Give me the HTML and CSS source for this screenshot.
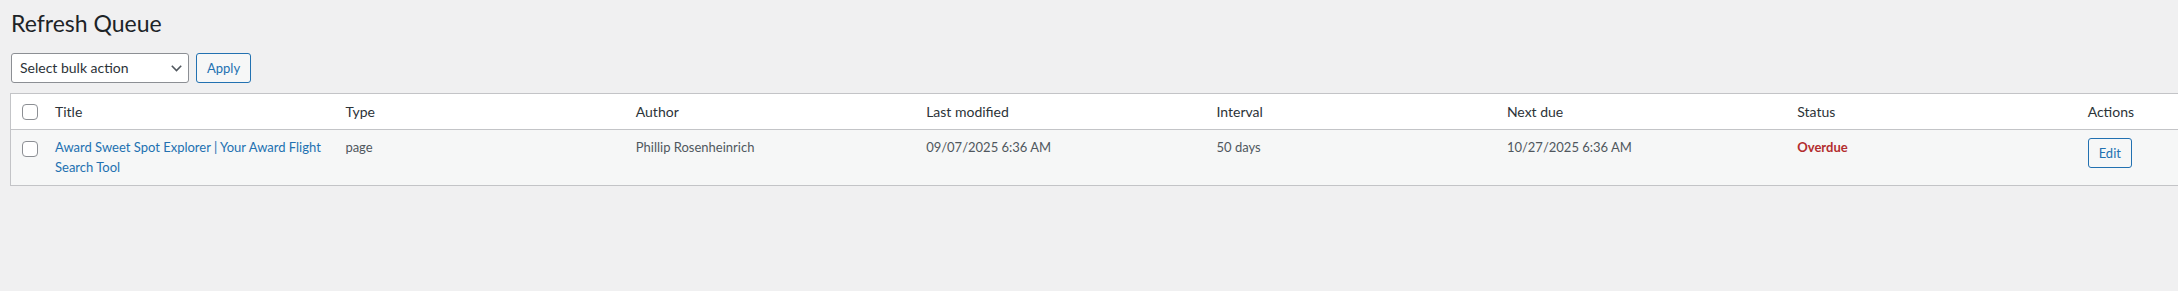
FILE: index.html
```html
<!DOCTYPE html>
<html lang="en">
<head>
    <meta charset="UTF-8">
    <meta name="viewport" content="width=device-width, initial-scale=1.0">
    <title>Refresh Queue</title>
    <link rel="stylesheet" href="styles.css">
</head>
<body>

<div class="wrap">

    <!-- Page Heading -->
    <h1>Refresh Queue</h1>

    <form id="queueForm">
        <!-- Bulk Actions -->
        <div class="tablenav">
            <div class="select-wrap">
                <select name="bulk_action" id="bulkAction">
                    <option value="-1">Select bulk action</option>
                    <option value="refresh">Mark as refreshed</option>
                    <option value="remove">Remove from queue</option>
                </select>
                <svg class="select-arrow" width="11" height="7" viewBox="0 0 11 7"><polyline points="0.8,0.8 5.5,5.5 10.2,0.8" /></svg>
            </div>
            <button type="submit" class="button">Apply</button>
        </div>

        <!-- Queue Table -->
        <div class="table-wrap">
            <table class="queue-table">
                <thead>
                    <tr>
                        <td class="check-column"><input type="checkbox" id="selectAll"></td>
                        <th>Title</th>
                        <th>Type</th>
                        <th>Author</th>
                        <th>Last modified</th>
                        <th>Interval</th>
                        <th>Next due</th>
                        <th>Status</th>
                        <th>Actions</th>
                    </tr>
                </thead>
                <tbody>
                    <tr>
                        <th class="check-column"><input type="checkbox" name="post[]" value="1"></th>
                        <td><a href="#">Award Sweet Spot Explorer | Your Award Flight Search Tool</a></td>
                        <td>page</td>
                        <td>Phillip Rosenheinrich</td>
                        <td>09/07/2025 6:36 AM</td>
                        <td>50 days</td>
                        <td>10/27/2025 6:36 AM</td>
                        <td><span class="status-overdue">Overdue</span></td>
                        <td><a href="#" class="button">Edit</a></td>
                    </tr>
                </tbody>
            </table>
        </div>
    </form>

</div>

<script>
    // Select all rows from the header checkbox
    document.getElementById('selectAll').addEventListener('change', function() {
        document.querySelectorAll('input[name="post[]"]').forEach(box => box.checked = this.checked);
    });

    document.getElementById('queueForm').addEventListener('submit', function(event) {
        event.preventDefault();
    });
</script>

</body>
</html>
```

FILE: styles.css
```css
body {
    margin: 0;
    font-family: "Segoe UI", Lato, "Liberation Sans", sans-serif;
    font-size: 13px;
    color: #3c434a;
    background-color: #f0f0f1; /* Admin grey */
}
.wrap {
    padding-left: 10px;
}
h1 {
    margin: 0;
    padding: 9px 0 4px 1px;
    font-size: 23px;
    font-weight: 400;
    line-height: 1.3;
    color: #1d2327;
}
.tablenav {
    display: flex;
    gap: 7px;
    margin: 10px 0;
    padding-left: 1px;
    height: 30px;
}
.select-wrap {
    position: relative;
}
select {
    appearance: none;
    -webkit-appearance: none;
    width: 178px;
    height: 30px;
    padding: 0 24px 0 8px;
    font-family: inherit;
    font-size: 14px;
    color: #2c3338;
    background-color: #fff;
    border: 1px solid #8c8f94;
    border-radius: 3px;
}
.select-arrow {
    position: absolute;
    top: 12px;
    right: 7px;
    pointer-events: none;
}
.select-arrow polyline {
    fill: none;
    stroke: #50575e;
    stroke-width: 1.6;
}
.button {
    display: inline-block;
    box-sizing: border-box;
    min-height: 30px;
    padding: 0 10px;
    font-family: inherit;
    font-size: 13px;
    line-height: 28px;
    color: #2271b1; /* Admin blue */
    background-color: #f6f7f7;
    border: 1px solid #2271b1;
    border-radius: 3px;
    text-decoration: none;
    cursor: pointer;
}
.button:hover {
    background-color: #f0f0f1;
    color: #0a4b78;
}
.table-wrap {
    overflow: hidden;
}
.queue-table {
    table-layout: fixed;
    width: 2359px;
    border-spacing: 0;
    border: 1px solid #c3c4c7;
    box-shadow: 0 1px 1px rgba(0, 0, 0, 0.04);
    background-color: #fff;
}
.queue-table th,
.queue-table td {
    padding: 8px 10px;
    text-align: left;
    vertical-align: top;
    font-weight: 400;
}
.queue-table thead th,
.queue-table thead td {
    font-size: 14px;
    line-height: 1.4em;
    color: #2c3338;
    border-bottom: 1px solid #c3c4c7;
}
.queue-table tbody td {
    line-height: 1.5em;
    color: #50575e;
}
.queue-table tbody tr:nth-child(odd) {
    background-color: #f6f7f7;
}
.queue-table .check-column {
    width: 34px;
    padding: 0;
}
.queue-table thead .check-column {
    vertical-align: middle;
}
.queue-table tbody .check-column {
    padding-top: 11px;
}
input[type="checkbox"] {
    appearance: none;
    -webkit-appearance: none;
    display: block;
    width: 16px;
    height: 16px;
    margin: 0 0 0 11px;
    background-color: #fff;
    border: 1px solid #8c8f94;
    border-radius: 4px;
    cursor: pointer;
}
input[type="checkbox"]:checked {
    border-color: #2271b1;
    box-shadow: inset 0 0 0 3px #fff;
    background-color: #2271b1;
}
.queue-table a {
    color: #2271b1;
    text-decoration: none;
}
.queue-table a.button {
    color: #2271b1;
}
.status-overdue {
    color: #b32d2e; /* Red for overdue */
    font-weight: 700;
}
```
